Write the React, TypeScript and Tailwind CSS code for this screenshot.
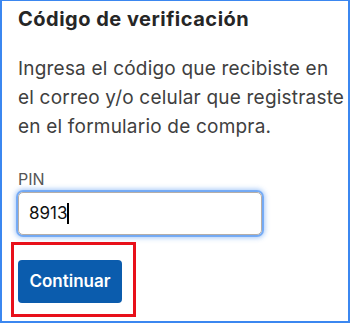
export default function App() {
  return (
    <div
      className="w-[350px] h-[323px] bg-white border-[#3b87f0] border-l-2 border-r-2 border-b-2 border-t overflow-hidden"
      style={{ fontFamily: 'Inter, "Liberation Sans", sans-serif' }}
    >
      <div className="pl-[16px] pt-[4px]">
        {/* Header */}
        <h1 className="text-[20px] leading-[28px] font-bold tracking-[0.5px] text-[#262626]">
          Código de verificación
        </h1>

        <p className="mt-[21px] text-[19px] leading-[29px] tracking-[0.2px] text-[#404040]">
          Ingresa el código que recibiste en el correo y/o celular que registraste en el formulario de compra.
        </p>

        {/* PIN field */}
        <label className="block mt-[28px] text-[16px] leading-[20px] text-[#555]">PIN</label>
        <div className="mt-[3px] w-[244px] h-[43px] rounded-[5px] border border-[#b5aea8] shadow-[0_0_0_2px_rgba(59,135,240,0.55),0_0_5px_3px_rgba(59,135,240,0.45)] flex items-center pl-[10px]">
          <span className="text-[17px] text-[#111]">8913</span>
          <span className="w-[2px] h-[21px] bg-black" />
        </div>

        {/* Highlighted action */}
        <div className="mt-[7px] -ml-[7px] w-[125px] h-[75px] border-[3px] border-[#e8101a] pt-[15px] pl-[4px]">
          <button className="w-[104px] h-[43px] rounded-[4px] bg-[#0b5cad] text-white text-[17px] font-semibold">
            Continuar
          </button>
        </div>
      </div>
    </div>
  );
}
